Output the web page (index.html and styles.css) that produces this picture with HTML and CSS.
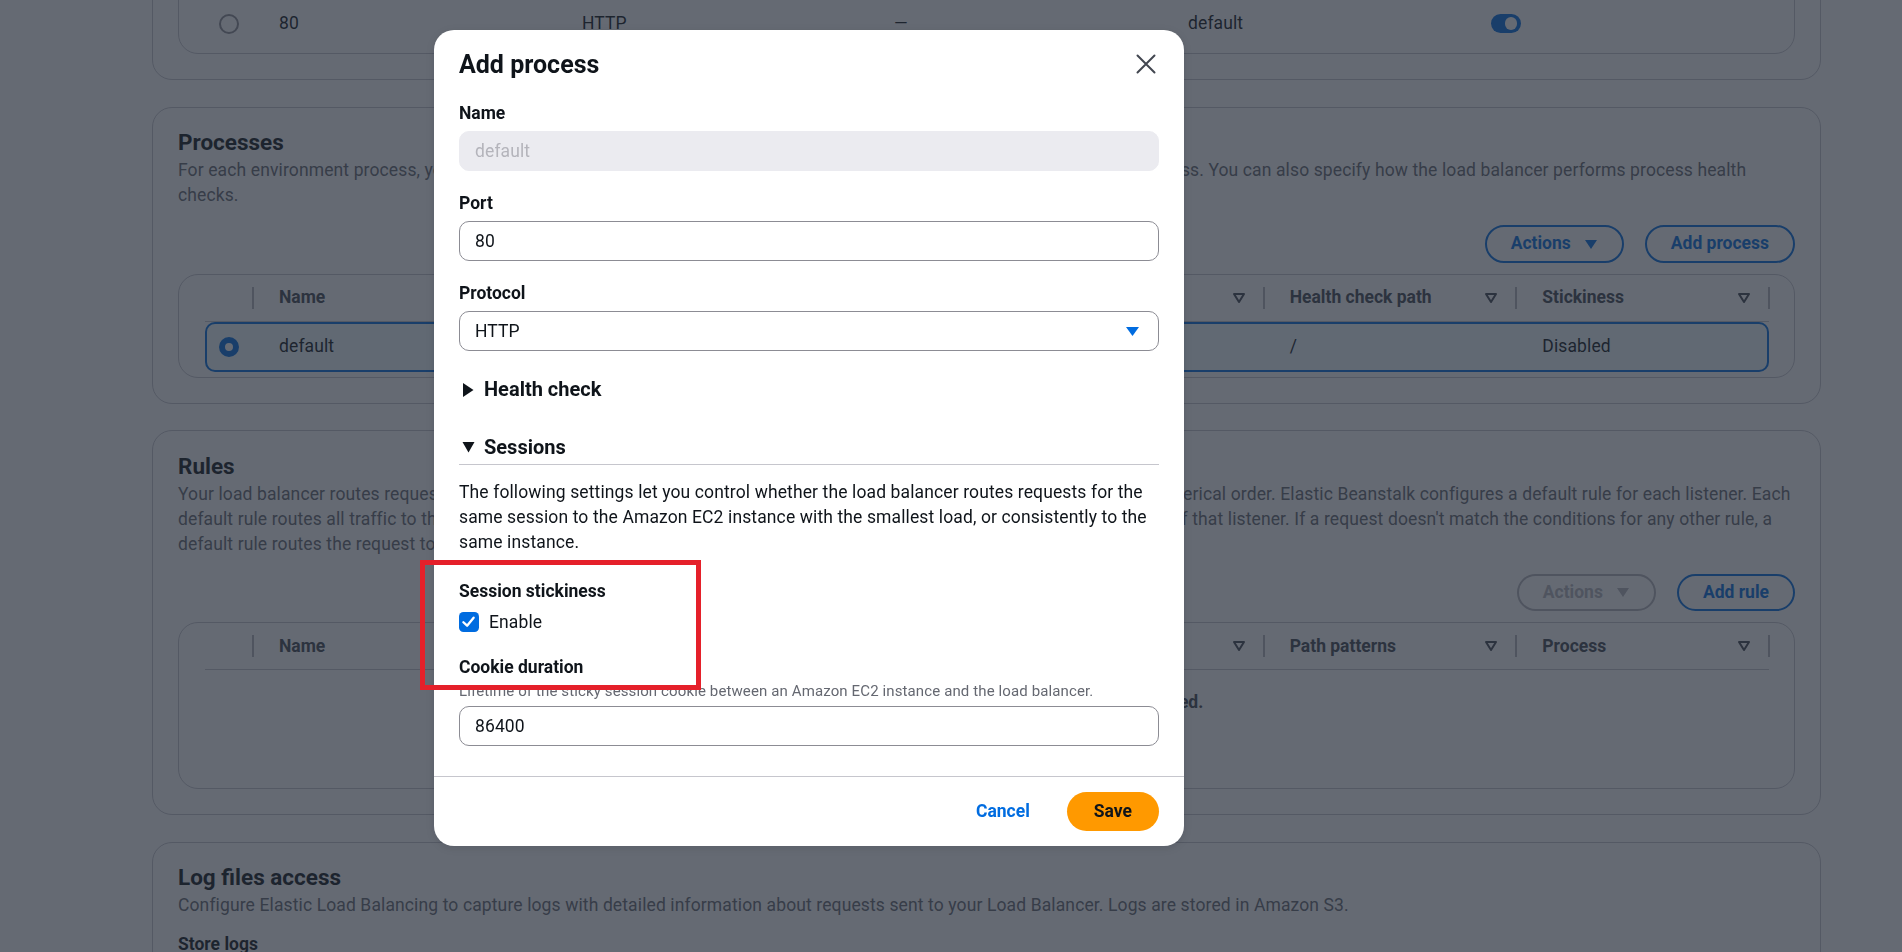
FILE: index.html
```html
<!DOCTYPE html>
<html lang="en">
<head>
<meta charset="utf-8">
<title>Add process</title>
<link rel="stylesheet" href="styles.css">
</head>
<body>
<main class="page">
  <section class="card card-top">
    <div class="table">
      <div class="thead cols-listeners">
        <div class="th sel"></div>
        <div class="th"><span>Port</span><svg class="sort" viewBox="0 0 14 14"><polygon points="2,3 12,3 7,11"/></svg></div>
        <div class="th"><span>Protocol</span><svg class="sort" viewBox="0 0 14 14"><polygon points="2,3 12,3 7,11"/></svg></div>
        <div class="th"><span>SSL certificate</span><svg class="sort" viewBox="0 0 14 14"><polygon points="2,3 12,3 7,11"/></svg></div>
        <div class="th"><span>Default process</span><svg class="sort" viewBox="0 0 14 14"><polygon points="2,3 12,3 7,11"/></svg></div>
        <div class="th"><span>Enabled</span><svg class="sort" viewBox="0 0 14 14"><polygon points="2,3 12,3 7,11"/></svg></div>
      </div>
      <div class="trow row-plain cols-listeners">
        <div class="td sel"><span class="radio"></span></div>
        <div class="td">80</div>
        <div class="td">HTTP</div>
        <div class="td">—</div>
        <div class="td">default</div>
        <div class="td"><span class="toggle"><span class="knob"></span></span></div>
      </div>
    </div>
  </section>

  <section class="card">
    <h2 class="card-title">Processes</h2>
    <p class="card-desc">For each environment process, you can specify the port and the protocol that the load balancer uses to route traffic to the process. You can also specify how the load balancer performs process health checks.</p>
    <div class="card-actions">
      <button class="btn">Actions <svg class="caret" viewBox="0 0 14 10"><polygon points="1,1 13,1 7,10"/></svg></button>
      <button class="btn">Add process</button>
    </div>
    <div class="table">
      <div class="thead cols6">
        <div class="th sel"></div>
        <div class="th"><span>Name</span><svg class="sort" viewBox="0 0 14 14"><polygon points="2,3 12,3 7,11"/></svg></div>
        <div class="th"><span>Port</span><svg class="sort" viewBox="0 0 14 14"><polygon points="2,3 12,3 7,11"/></svg></div>
        <div class="th"><span>Protocol</span><svg class="sort" viewBox="0 0 14 14"><polygon points="2,3 12,3 7,11"/></svg></div>
        <div class="th"><span>HTTP code</span><svg class="sort" viewBox="0 0 14 14"><polygon points="2,3 12,3 7,11"/></svg></div>
        <div class="th"><span>Health check path</span><svg class="sort" viewBox="0 0 14 14"><polygon points="2,3 12,3 7,11"/></svg></div>
        <div class="th"><span>Stickiness</span><svg class="sort" viewBox="0 0 14 14"><polygon points="2,3 12,3 7,11"/></svg></div>
      </div>
      <div class="trow row-selected cols6">
        <div class="td sel"><span class="radio checked"></span></div>
        <div class="td">default</div>
        <div class="td">80</div>
        <div class="td">HTTP</div>
        <div class="td">200</div>
        <div class="td">/</div>
        <div class="td">Disabled</div>
      </div>
    </div>
  </section>

  <section class="card">
    <h2 class="card-title">Rules</h2>
    <p class="card-desc">Your load balancer routes requests to processes using its rules. The load balancer evaluates all the rules of each listener in numerical order. Elastic Beanstalk configures a default rule for each listener. Each default rule routes all traffic to the default process. You can add your own custom rules that take priority over the default rules of that listener. If a request doesn't match the conditions for any other rule, a default rule routes the request to the default process.</p>
    <div class="card-actions">
      <button class="btn btn-disabled">Actions <svg class="caret" viewBox="0 0 14 10"><polygon points="1,1 13,1 7,10"/></svg></button>
      <button class="btn">Add rule</button>
    </div>
    <div class="table">
      <div class="thead cols6">
        <div class="th sel"></div>
        <div class="th"><span>Name</span><svg class="sort" viewBox="0 0 14 14"><polygon points="2,3 12,3 7,11"/></svg></div>
        <div class="th"><span>Listener port</span><svg class="sort" viewBox="0 0 14 14"><polygon points="2,3 12,3 7,11"/></svg></div>
        <div class="th"><span>Priority</span><svg class="sort" viewBox="0 0 14 14"><polygon points="2,3 12,3 7,11"/></svg></div>
        <div class="th"><span>Host headers</span><svg class="sort" viewBox="0 0 14 14"><polygon points="2,3 12,3 7,11"/></svg></div>
        <div class="th"><span>Path patterns</span><svg class="sort" viewBox="0 0 14 14"><polygon points="2,3 12,3 7,11"/></svg></div>
        <div class="th"><span>Process</span><svg class="sort" viewBox="0 0 14 14"><polygon points="2,3 12,3 7,11"/></svg></div>
      </div>
      <div class="tempty">No extra rules for the HTTP listener have been defined.</div>
    </div>
  </section>

  <section class="card">
    <h2 class="card-title">Log files access</h2>
    <p class="card-desc">Configure Elastic Load Balancing to capture logs with detailed information about requests sent to your Load Balancer. Logs are stored in Amazon S3.</p>
    <div class="store-label">Store logs</div>
  </section>
</main>

<div class="overlay">
  <div class="modal" role="dialog" aria-labelledby="modal-title">
    <div class="modal-header">
      <h1 id="modal-title">Add process</h1>
      <button class="close" aria-label="Close">
        <svg viewBox="0 0 20 20"><path d="M1.5 1.5 L18.5 18.5 M18.5 1.5 L1.5 18.5"/></svg>
      </button>
    </div>
    <div class="modal-body">
      <div class="field">
        <label class="label">Name</label>
        <input class="input" value="default" disabled>
      </div>
      <div class="field">
        <label class="label">Port</label>
        <input class="input" value="80">
      </div>
      <div class="field">
        <label class="label">Protocol</label>
        <div class="select"><span>HTTP</span><svg class="select-caret" viewBox="0 0 13 9"><polygon points="0,0 13,0 6.5,9"/></svg></div>
      </div>
      <div class="expand expand-health">
        <svg viewBox="0 0 20 20"><polygon points="4,3 14.5,10 4,17"/></svg>
        <span>Health check</span>
      </div>
      <div class="expand expand-sessions">
        <svg viewBox="0 0 20 20"><polygon points="3.5,5 15.5,5 9.5,15.5"/></svg>
        <span>Sessions</span>
      </div>
      <p class="modal-text">The following settings let you control whether the load balancer routes requests for the same session to the Amazon EC2 instance with the smallest load, or consistently to the same instance.</p>
      <div class="field field-sticky">
        <div class="label">Session stickiness</div>
        <label class="check-row"><span class="checkbox"><svg viewBox="0 0 20 20"><polyline points="4.5,10.5 8.3,14 15,5.8"/></svg></span><span>Enable</span></label>
      </div>
      <div class="field field-cookie">
        <label class="label">Cookie duration</label>
        <div class="field-desc">Lifetime of the sticky session cookie between an Amazon EC2 instance and the load balancer.</div>
        <input class="input" value="86400">
      </div>
    </div>
    <div class="modal-footer">
      <button class="link-btn">Cancel</button>
      <button class="primary-btn">Save</button>
    </div>
  </div>
</div>

<div class="annotation"></div>
</body>
</html>
```

FILE: styles.css
```css
* { box-sizing: border-box; }

html, body { margin: 0; padding: 0; }

body {
  width: 1902px;
  height: 952px;
  overflow: hidden;
  background: #ffffff;
  font-family: Roboto, "Noto Sans", "Liberation Sans", sans-serif;
  font-size: 17.5px;
  line-height: 25px;
  letter-spacing: 0.12px;
  color: #0f141a;
}

button { font: inherit; letter-spacing: inherit; }

/* ---------- background page ---------- */
.page {
  display: flex;
  flex-direction: column;
  gap: 26.5px;
  padding: 0 81px 0 152px;
  margin-top: -68.5px;
}

.card {
  border: 1px solid #c6c6cd;
  border-radius: 20px;
  padding: 19.5px 25px 25px;
}

.card-title {
  margin: 0;
  font-size: 22.5px;
  line-height: 30px;
  font-weight: 700;
  letter-spacing: 0;
  color: #0f141a;
}

.card-desc {
  margin: 1px 0 0;
  color: #656871;
}

.card-actions {
  display: flex;
  justify-content: flex-end;
  gap: 21px;
  margin-top: 17px;
}

.btn {
  display: inline-flex;
  align-items: center;
  gap: 13px;
  height: 37.5px;
  padding: 0 24px;
  border: 2px solid #006ce0;
  border-radius: 20px;
  background: #ffffff;
  color: #006ce0;
  font-weight: 700;
  letter-spacing: 0;
}

.btn .caret { width: 14px; height: 10px; fill: currentColor; }

.btn-disabled { border-color: #b4b4bb; color: #b4b4bb; }

.table {
  margin-top: 11px;
  border: 1px solid #c6c6cd;
  border-radius: 20px;
  padding: 0 25px 5px 26px;
}

.card-top .table { margin-top: 0; padding-bottom: 6px; }

.cols6 { display: grid; grid-template-columns: 48px repeat(6, 1fr); }
.cols-listeners { display: grid; grid-template-columns: 48px 303px 312px 294px 303px 1fr; }

.thead {
  height: 47px;
  border-bottom: 1px solid #c6c6cd;
  align-items: center;
}

.th {
  position: relative;
  display: flex;
  align-items: center;
  justify-content: space-between;
  height: 46px;
  padding: 0 18px 0 26px;
  font-weight: 700;
  letter-spacing: 0;
  color: #424650;
}

.th::after {
  content: "";
  position: absolute;
  right: -1px;
  top: 12px;
  width: 2px;
  height: 22px;
  background: #b4b4bb;
}

.th .sort {
  width: 14px;
  height: 14px;
  fill: none;
  stroke: #424650;
  stroke-width: 2;
  stroke-linejoin: round;
}

.trow { align-items: center; }

.row-plain { height: 47px; }

.row-selected {
  height: 50px;
  border-radius: 10px;
  box-shadow: inset 0 0 0 2px #006ce0;
  background: #f0fbff;
}

.td {
  display: flex;
  align-items: center;
  padding-left: 26px;
  color: #0f141a;
}

.td.sel { justify-content: center; padding-left: 0; }

.radio {
  width: 20px;
  height: 20px;
  border-radius: 50%;
  border: 2px solid #8c8c94;
  background: #ffffff;
}

.radio.checked { border: 6px solid #006ce0; }

.toggle {
  display: flex;
  justify-content: flex-end;
  align-items: center;
  width: 30px;
  height: 19px;
  padding-right: 4px;
  border-radius: 10px;
  background: #006ce0;
}

.toggle .knob {
  width: 12.5px;
  height: 12.5px;
  border-radius: 50%;
  background: #ffffff;
}

.tempty {
  height: 113px;
  padding-top: 20px;
  text-align: center;
  font-weight: 700;
  letter-spacing: 0;
  color: #424650;
}

.store-label {
  margin-top: 14px;
  font-weight: 700;
  letter-spacing: 0;
}

/* ---------- modal ---------- */
.overlay {
  position: fixed;
  inset: 0;
  background: rgba(35, 43, 55, 0.7);
  padding: 30px 0 0 434px;
}

.modal {
  width: 750px;
  background: #ffffff;
  border-radius: 20px;
  box-shadow: 0 2px 8px rgba(0, 7, 22, 0.12);
}

.modal-header {
  display: flex;
  justify-content: space-between;
  align-items: flex-start;
  padding: 19.5px 25px 0;
}

.modal-header h1 {
  margin: 0;
  font-size: 25px;
  line-height: 30px;
  font-weight: 700;
  letter-spacing: 0;
}

.close {
  margin: 4.5px 3.5px 0 0;
  padding: 0;
  width: 20px;
  height: 20px;
  border: 0;
  background: none;
}

.close svg {
  display: block;
  width: 20px;
  height: 20px;
  fill: none;
  stroke: #424650;
  stroke-width: 2;
  stroke-linecap: round;
}

.modal-body { padding: 21px 25px 30px; }

.field { display: flex; flex-direction: column; }
.field + .field { margin-top: 19.5px; }

.label {
  display: block;
  margin-bottom: 5.5px;
  font-weight: 700;
  letter-spacing: 0;
  color: #0f141a;
}

.input {
  display: block;
  width: 100%;
  height: 40px;
  margin: 0;
  padding: 0 15px;
  border: 1px solid #8c8c94;
  border-radius: 10px;
  background: #ffffff;
  font: inherit;
  letter-spacing: inherit;
  color: #0f141a;
  outline: none;
}

.input:disabled {
  border-color: #ebebf0;
  background: #ebebf0;
  color: #b4b4bb;
  -webkit-text-fill-color: #b4b4bb;
}

.select {
  display: flex;
  align-items: center;
  justify-content: space-between;
  height: 40px;
  padding: 0 19px 0 15px;
  border: 1px solid #8c8c94;
  border-radius: 10px;
}

.select-caret { width: 13px; height: 9px; fill: #006ce0; }

.expand {
  display: flex;
  align-items: center;
  gap: 5px;
  height: 25px;
  font-size: 20px;
  line-height: 25px;
  font-weight: 700;
  letter-spacing: 0;
}

.expand svg { width: 20px; height: 20px; fill: #0f141a; flex: none; }

.expand-health { margin-top: 26px; }

.expand-sessions {
  margin-top: 32.5px;
  height: 30.5px;
  align-items: flex-start;
  border-bottom: 1px solid #c6c6cd;
}

.expand-sessions svg { margin-top: 2.5px; }

.modal-text { margin: 14.5px 0 0; }

.field.field-sticky { margin-top: 24.7px; }

.check-row { display: flex; align-items: center; gap: 10.5px; }

.checkbox {
  display: flex;
  width: 19.5px;
  height: 19.5px;
  border-radius: 4.5px;
  background: #006ce0;
}

.checkbox svg {
  width: 19.5px;
  height: 19.5px;
  fill: none;
  stroke: #ffffff;
  stroke-width: 2.4;
  stroke-linecap: round;
  stroke-linejoin: round;
}

.field.field-cookie { margin-top: 20px; }
.field-cookie .label { margin-bottom: 1px; }

.field-desc {
  margin-bottom: 5.5px;
  font-size: 15px;
  line-height: 20px;
  color: #656871;
}

.modal-footer {
  display: flex;
  justify-content: flex-end;
  align-items: center;
  gap: 12px;
  padding: 15px 25px;
  border-top: 1px solid #c6c6cd;
}

.link-btn {
  height: 39px;
  padding: 0 25px;
  border: 0;
  background: none;
  color: #006ce0;
  font-weight: 700;
  letter-spacing: 0;
}

.primary-btn {
  height: 39px;
  padding: 0 27px;
  border: 0;
  border-radius: 20px;
  background: #ff9900;
  color: #0f141a;
  font-weight: 700;
  letter-spacing: 0;
}

/* ---------- annotation highlight ---------- */
.annotation {
  position: fixed;
  left: 420px;
  top: 560px;
  width: 281px;
  height: 130px;
  border: 5px solid #e5202a;
}
```
